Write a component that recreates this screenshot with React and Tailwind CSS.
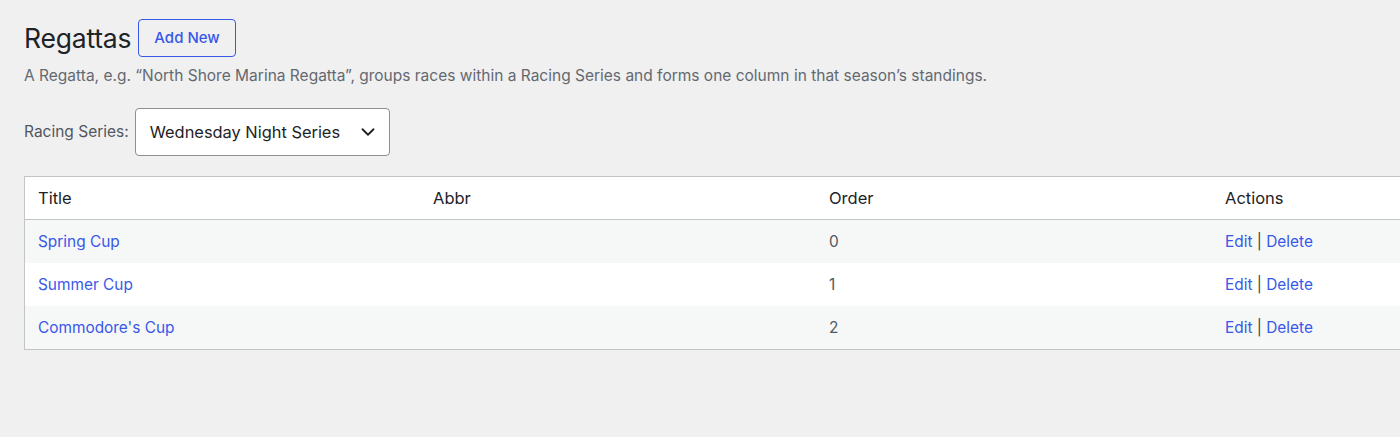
import React from "react";
import { ChevronDown } from "lucide-react";

const rows = [
  { title: "Spring Cup", abbr: "", order: "0" },
  { title: "Summer Cup", abbr: "", order: "1" },
  { title: "Commodore's Cup", abbr: "", order: "2" },
];

export default function App() {
  return (
    <div
      className="w-[1400px] h-[437px] overflow-hidden bg-[#f0f0f1] text-[#1d2327]"
      style={{ fontFamily: "Inter, 'Noto Sans', sans-serif" }}
    >
      <div className="pl-6 pt-[19px]">
        <div className="flex items-center gap-[7px]">
          <h1 className="text-[26.5px] leading-none tracking-[-0.2px] text-[#1d2327]">Regattas</h1>
          <button className="h-[38px] px-[15px] rounded-[4px] border border-[#3858e9] text-[#3858e9] text-[15px] font-medium bg-transparent">
            Add New
          </button>
        </div>
        <p className="mt-[9px] text-[15.5px] leading-[20px] text-[#646970]">
          A Regatta, e.g. “North Shore Marina Regatta”, groups races within a Racing Series and forms one column in that season’s standings.
        </p>
        <div className="mt-[22px] flex items-center gap-[6px]">
          <span className="text-[15.5px] text-[#50575e]">Racing Series:</span>
          <div className="w-[255px] h-[48px] bg-white border border-[#8c8f94] rounded-[4px] flex items-center justify-between pl-[14px] pr-[10px]">
            <span className="text-[16.4px] text-[#1d2327]">Wednesday Night Series</span>
            <ChevronDown size={22} strokeWidth={2} className="text-[#1d2327]" />
          </div>
        </div>
        <div className="mt-[20px] w-[1586px] border border-[#c3c4c7] bg-white">
          <div className="grid grid-cols-[396px_396px_396px_396px] h-[43px] items-center border-b border-[#c3c4c7] text-[16.5px] text-[#1d2327] bg-white">
            <div className="pl-[13px]">Title</div>
            <div className="pl-[12px]">Abbr</div>
            <div className="pl-[12px]">Order</div>
            <div className="pl-[12px]">Actions</div>
          </div>
          {rows.map((r, i) => (
            <div
              key={r.title}
              className={
                "grid grid-cols-[396px_396px_396px_396px] h-[43px] items-center text-[15.4px] " +
                (i % 2 === 0 ? "bg-[#f6f7f7]" : "bg-white")
              }
            >
              <div className="pl-[13px] text-[#3858e9]">{r.title}</div>
              <div className="pl-[12px] text-[#50575e]">{r.abbr}</div>
              <div className="pl-[12px] text-[#50575e]">{r.order}</div>
              <div className="pl-[12px] text-[#50575e]">
                <span className="text-[#3858e9]">Edit</span>
                <span className="text-[#3c434a]"> | </span>
                <span className="text-[#3858e9]">Delete</span>
              </div>
            </div>
          ))}
        </div>
      </div>
    </div>
  );
}
